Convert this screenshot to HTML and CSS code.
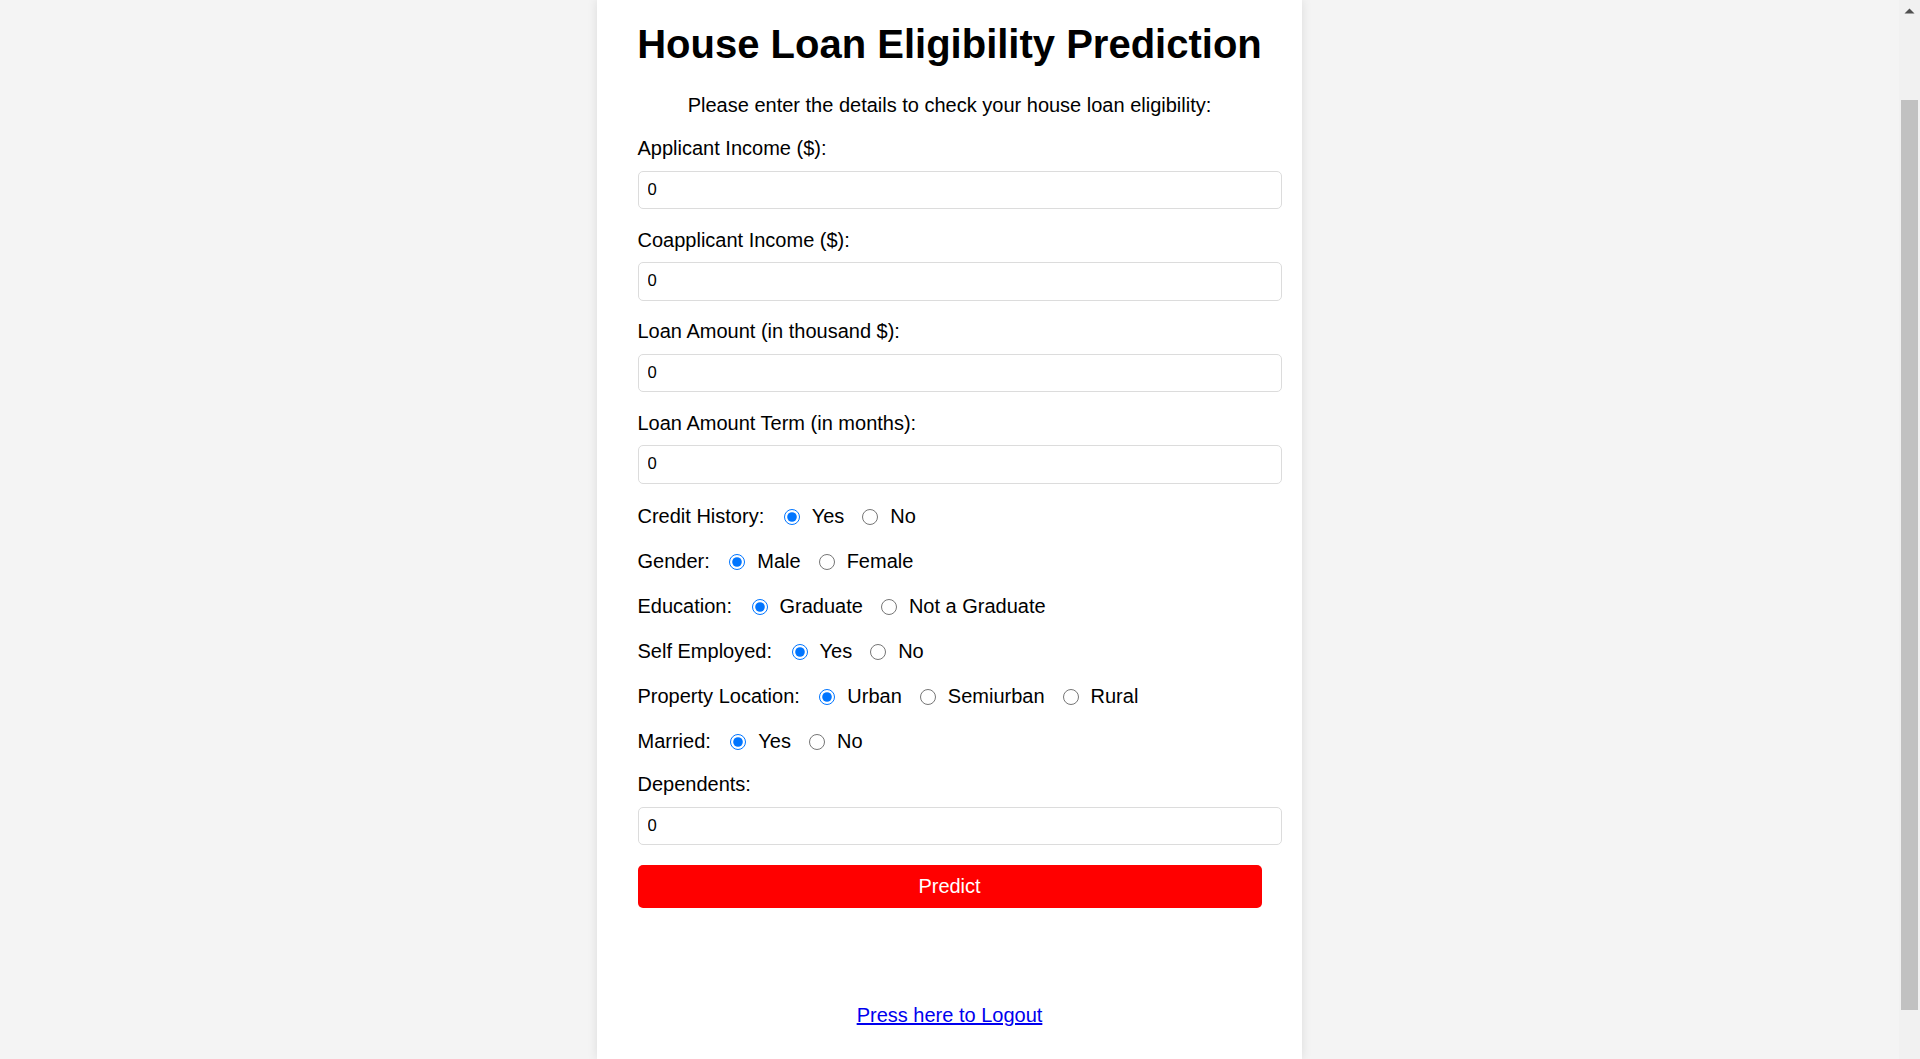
FILE: index.html
```html
<!DOCTYPE html>
<html lang="en">
<head>
<meta charset="utf-8">
<title>House Loan Eligibility Prediction</title>
<link rel="stylesheet" href="styles.css">
</head>
<body>
<div class="page">
  <main class="card">
    <h1 class="title">House Loan Eligibility Prediction</h1>
    <p class="intro">Please enter the details to check your house loan eligibility:</p>
    <form class="form">
      <div class="field">
        <label class="field-label" for="ai">Applicant Income ($):</label>
        <input class="text-input" id="ai" type="text" value="0">
      </div>
      <div class="field">
        <label class="field-label" for="ci">Coapplicant Income ($):</label>
        <input class="text-input" id="ci" type="text" value="0">
      </div>
      <div class="field">
        <label class="field-label" for="la">Loan Amount (in thousand $):</label>
        <input class="text-input" id="la" type="text" value="0">
      </div>
      <div class="field">
        <label class="field-label" for="lt">Loan Amount Term (in months):</label>
        <input class="text-input" id="lt" type="text" value="0">
      </div>

      <div class="radios">
        <div class="radio-row">
          <span class="radio-label">Credit History:</span>
          <input class="radio" type="radio" name="credit" checked><span class="opt">Yes</span>
          <input class="radio" type="radio" name="credit"><span class="opt">No</span>
        </div>
        <div class="radio-row">
          <span class="radio-label">Gender:</span>
          <input class="radio" type="radio" name="gender" checked><span class="opt">Male</span>
          <input class="radio" type="radio" name="gender"><span class="opt">Female</span>
        </div>
        <div class="radio-row">
          <span class="radio-label">Education:</span>
          <input class="radio" type="radio" name="edu" checked><span class="opt">Graduate</span>
          <input class="radio" type="radio" name="edu"><span class="opt">Not a Graduate</span>
        </div>
        <div class="radio-row">
          <span class="radio-label">Self Employed:</span>
          <input class="radio" type="radio" name="self" checked><span class="opt">Yes</span>
          <input class="radio" type="radio" name="self"><span class="opt">No</span>
        </div>
        <div class="radio-row">
          <span class="radio-label">Property Location:</span>
          <input class="radio" type="radio" name="prop" checked><span class="opt">Urban</span>
          <input class="radio" type="radio" name="prop"><span class="opt">Semiurban</span>
          <input class="radio" type="radio" name="prop"><span class="opt">Rural</span>
        </div>
        <div class="radio-row">
          <span class="radio-label">Married:</span>
          <input class="radio" type="radio" name="married" checked><span class="opt">Yes</span>
          <input class="radio" type="radio" name="married"><span class="opt">No</span>
        </div>
      </div>

      <div class="field">
        <label class="field-label" for="dp">Dependents:</label>
        <input class="text-input" id="dp" type="text" value="0">
      </div>
      <button class="predict" type="button">Predict</button>
    </form>
    <p class="logout"><a href="#">Press here to Logout</a></p>
  </main>
</div>
<div class="scrollbar">
  <div class="sb-button">
    <svg width="21" height="21" viewBox="0 0 21 21"><polygon points="5.5,13.5 10.5,8.5 15.5,13.5" fill="#505050"/></svg>
  </div>
  <div class="sb-thumb"></div>
</div>
</body>
</html>
```

FILE: styles.css
```css
html, body {
  margin: 0;
  padding: 0;
  height: 100%;
}

body {
  display: flex;
  background: #f4f4f4;
  font-family: "Liberation Sans", Arial, sans-serif;
  font-size: 20px;
  color: #000;
  overflow: hidden;
}

.page {
  flex: 1;
  display: flex;
  justify-content: center;
}

.card {
  width: 705px;
  min-height: 100%;
  box-sizing: border-box;
  padding: 20.5px 40.5px 20px;
  background: #fff;
  box-shadow: 0 0 10px rgba(0, 0, 0, 0.1);
}

.title {
  margin: 0 -20px 27.5px;
  font-size: 40px;
  font-weight: bold;
  line-height: 46px;
  text-align: center;
  white-space: nowrap;
}

.intro {
  margin: 0 0 20px;
  line-height: 23px;
  text-align: center;
}

.form {
  margin: 0;
}

.field {
  margin-bottom: 19.5px;
}

.field-label {
  display: block;
  line-height: 23px;
  margin-bottom: 10.5px;
}

.text-input {
  display: block;
  width: 100%;
  height: 36.5px;
  padding: 0 9px;
  margin: 0;
  border: 1px solid #dcdcdc;
  border-radius: 5px;
  font-family: "Liberation Sans", Arial, sans-serif;
  font-size: 16.67px;
  color: #000;
  background: #fff;
  outline: none;
}

.radios {
  padding-top: 2px;
  margin-bottom: -2px;
}

.radio-row {
  display: flex;
  align-items: center;
  height: 23px;
  line-height: 23px;
  margin-bottom: 22px;
}

.radio {
  width: 16px;
  height: 16px;
  margin: 0 12px 0 18px;
}

.radio-label + .radio {
  margin-left: 19.5px;
}

.predict {
  display: block;
  width: 100%;
  height: 43.5px;
  margin-top: 3.5px;
  padding: 0;
  border: none;
  border-radius: 5px;
  background: #ff0000;
  color: #fff;
  font-family: "Liberation Sans", Arial, sans-serif;
  font-size: 20px;
  line-height: 23px;
  cursor: pointer;
}

.logout {
  margin: 96px 0 0;
  line-height: 23px;
  text-align: center;
}

.logout a {
  color: #0000ee;
  text-decoration: underline;
}

.scrollbar {
  width: 21px;
  flex: none;
  background: #f1f1f1;
  display: flex;
  flex-direction: column;
  align-items: center;
}

.sb-button {
  width: 21px;
  height: 21px;
}

.sb-button svg {
  display: block;
}

.sb-thumb {
  width: 17px;
  height: 910px;
  margin-top: 79px;
  background: #c1c1c1;
}
```
